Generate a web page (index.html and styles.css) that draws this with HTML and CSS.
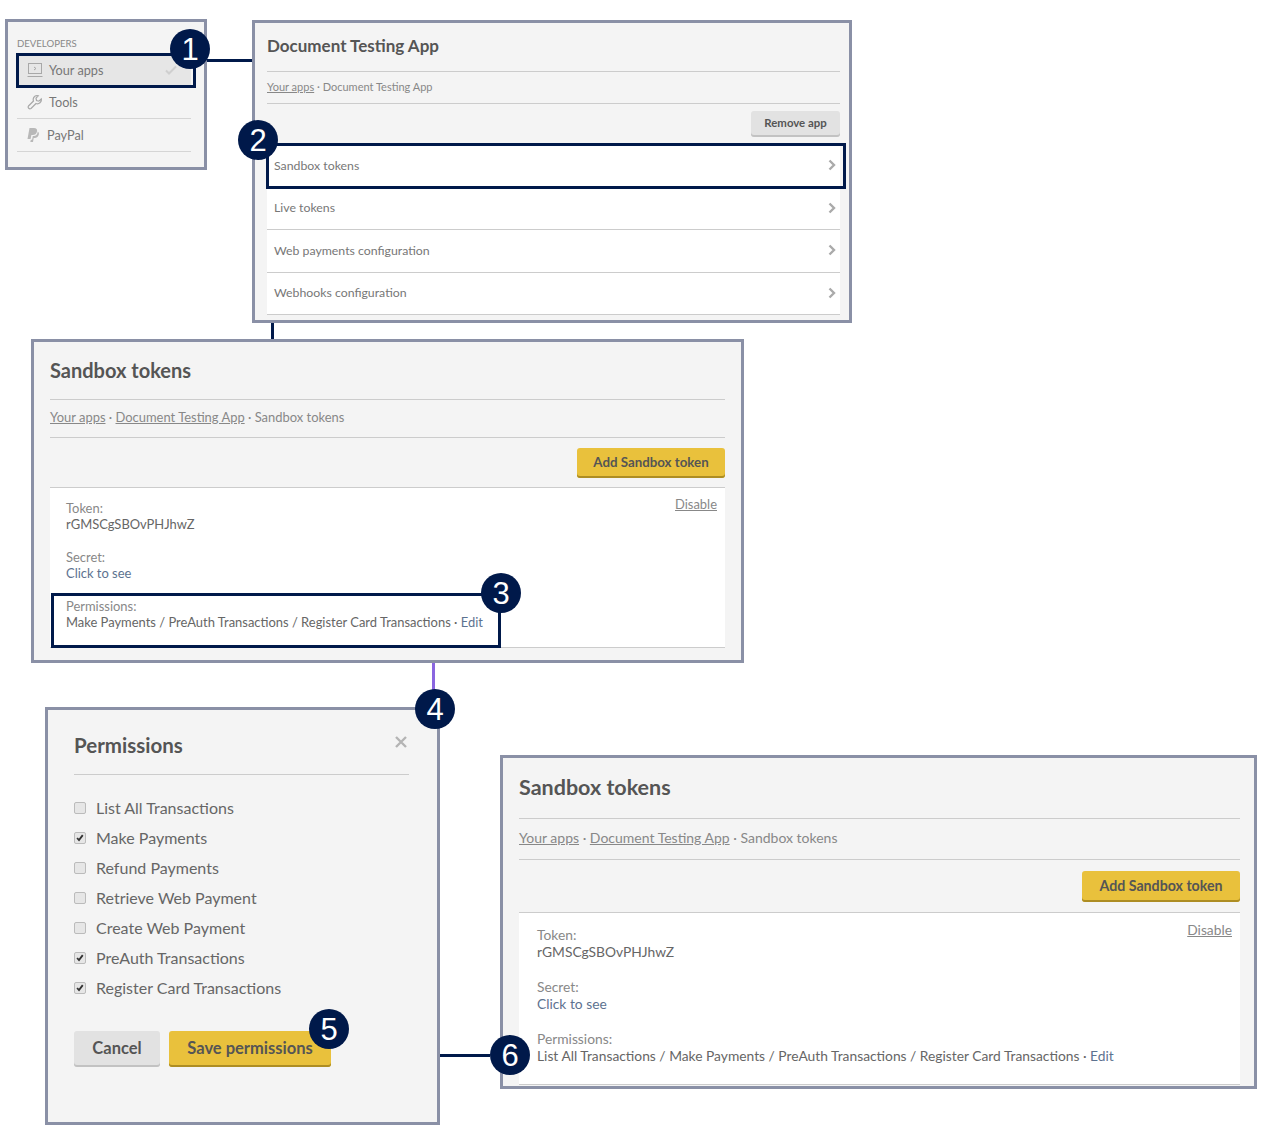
FILE: index.html
```html
<!DOCTYPE html>
<html lang="en">
<head>
<meta charset="UTF-8">
<meta name="viewport" content="width=device-width, initial-scale=1.0">
<title>Sandbox tokens</title>
<link rel="stylesheet" href="styles.css">
</head>
<body>
<div class="canvas">

    <!-- connectors between the screens -->
    <div class="wire wire-1"></div>
    <div class="wire wire-2"></div>
    <div class="wire wire-3"></div>
    <div class="wire wire-4"></div>

    <!-- sidebar -->
    <div class="shot shot-nav">
        <div class="nav-title">DEVELOPERS</div>
        <div class="nav-item nav-active">
            <svg class="nav-icon" viewBox="0 0 16 16" fill="none" stroke="#a8a8a8" stroke-width="1"><rect x="1.500" y="1.500" width="13" height="10"/><path d="M0.500 14.500h15M7 5l2 1.500L7 8"/></svg>
            <span>Your apps</span>
            <svg class="nav-check" viewBox="0 0 12 10" fill="none" stroke="#cfcfcf" stroke-width="2"><path d="M1 5.500l3 3 7-7"/></svg>
        </div>
        <div class="nav-item">
            <svg class="nav-icon" viewBox="0 0 16 16" fill="none" stroke="#a8a8a8" stroke-width="1.200"><path d="M10 1.500a4 4 0 0 0-3.500 5.500L1.500 12a1.800 1.800 0 0 0 2.500 2.500L9 9.500a4 4 0 0 0 5.300-4.500L11.800 7.200 9.500 6.500 9 4.200 11.300 1.700A4 4 0 0 0 10 1.500z"/></svg>
            <span>Tools</span>
        </div>
        <div class="nav-item nav-paypal">
            <svg class="nav-icon nav-icon-pp" viewBox="0 0 12 14" fill="#b8b8b8"><path d="M2.500 0H7c2.400 0 3.500 1.300 3 3.400C9.500 5.700 8 7 5.700 7H4.400L3.600 11H.500z"/><path d="M10.800 3.500c1 .7 1.300 1.700 1 3C11.300 8.700 9.800 10 7.600 10H6.700L6 14H3.300l.5-2.300h1.300L5.800 8h1c2.200 0 3.600-1.300 4-4.500z"/></svg>
            <span>PayPal</span>
        </div>
    </div>

    <!-- app detail -->
    <div class="shot shot-app">
        <h2 class="shot-title">Document Testing App</h2>
        <div class="crumbs"><a>Your apps</a> · Document Testing App</div>
        <div class="actions"><button class="btn btn-grey">Remove app</button></div>
        <div class="menu">
            <div class="menu-row">Sandbox tokens<svg class="chevron" viewBox="0 0 8 12" fill="none" stroke="#aaa" stroke-width="2.400"><path d="M1.500 1.500L6 6l-4.500 4.500"/></svg></div>
            <div class="menu-row">Live tokens<svg class="chevron" viewBox="0 0 8 12" fill="none" stroke="#aaa" stroke-width="2.400"><path d="M1.500 1.500L6 6l-4.500 4.500"/></svg></div>
            <div class="menu-row">Web payments configuration<svg class="chevron" viewBox="0 0 8 12" fill="none" stroke="#aaa" stroke-width="2.400"><path d="M1.500 1.500L6 6l-4.500 4.500"/></svg></div>
            <div class="menu-row">Webhooks configuration<svg class="chevron" viewBox="0 0 8 12" fill="none" stroke="#aaa" stroke-width="2.400"><path d="M1.500 1.500L6 6l-4.500 4.500"/></svg></div>
        </div>
    </div>

    <!-- sandbox tokens before edit -->
    <div class="shot shot-tokens">
        <h2 class="shot-title">Sandbox tokens</h2>
        <div class="crumbs"><a>Your apps</a> · <a>Document Testing App</a> · Sandbox tokens</div>
        <div class="actions"><button class="btn btn-yellow">Add Sandbox token</button></div>
        <div class="token-card">
            <a class="disable">Disable</a>
            <div class="field"><div class="field-label">Token:</div><div>rGMSCgSBOvPHJhwZ</div></div>
            <div class="field"><div class="field-label">Secret:</div><div class="link">Click to see</div></div>
            <div class="field"><div class="field-label">Permissions:</div><div>Make Payments / PreAuth Transactions / Register Card Transactions · <span class="link">Edit</span></div></div>
        </div>
    </div>

    <!-- permissions dialog -->
    <div class="shot shot-dialog">
        <div class="dialog-head">
            <h2 class="shot-title">Permissions</h2>
            <svg class="dialog-close" viewBox="0 0 12 12" fill="none" stroke="#b4b4b4" stroke-width="2.400"><path d="M1 1l10 10M11 1L1 11"/></svg>
        </div>
        <ul class="perm-list">
            <li><span class="box"></span>List All Transactions</li>
            <li><span class="box"><svg viewBox="0 0 12 12" fill="none" stroke="#333" stroke-width="2.200"><path d="M2.500 6l2.300 2.500 4.500-6"/></svg></span>Make Payments</li>
            <li><span class="box"></span>Refund Payments</li>
            <li><span class="box"></span>Retrieve Web Payment</li>
            <li><span class="box"></span>Create Web Payment</li>
            <li><span class="box"><svg viewBox="0 0 12 12" fill="none" stroke="#333" stroke-width="2.200"><path d="M2.500 6l2.300 2.500 4.500-6"/></svg></span>PreAuth Transactions</li>
            <li><span class="box"><svg viewBox="0 0 12 12" fill="none" stroke="#333" stroke-width="2.200"><path d="M2.500 6l2.300 2.500 4.500-6"/></svg></span>Register Card Transactions</li>
        </ul>
        <div class="dialog-buttons">
            <button class="btn btn-grey btn-cancel">Cancel</button>
            <button class="btn btn-yellow btn-save">Save permissions</button>
        </div>
    </div>

    <!-- sandbox tokens after edit -->
    <div class="shot shot-tokens shot-tokens-big">
        <h2 class="shot-title">Sandbox tokens</h2>
        <div class="crumbs"><a>Your apps</a> · <a>Document Testing App</a> · Sandbox tokens</div>
        <div class="actions"><button class="btn btn-yellow">Add Sandbox token</button></div>
        <div class="token-card">
            <a class="disable">Disable</a>
            <div class="field"><div class="field-label">Token:</div><div>rGMSCgSBOvPHJhwZ</div></div>
            <div class="field"><div class="field-label">Secret:</div><div class="link">Click to see</div></div>
            <div class="field"><div class="field-label">Permissions:</div><div>List All Transactions / Make Payments / PreAuth Transactions / Register Card Transactions · <span class="link">Edit</span></div></div>
        </div>
    </div>

    <!-- highlight boxes -->
    <div class="mark mark-1"></div>
    <div class="mark mark-2"></div>
    <div class="mark mark-3"></div>

    <!-- numbered callouts -->
    <div class="badge badge-1">1</div>
    <div class="badge badge-2">2</div>
    <div class="badge badge-3">3</div>
    <div class="badge badge-4">4</div>
    <div class="badge badge-5">5</div>
    <div class="badge badge-6">6</div>
</div>
</body>
</html>
```

FILE: styles.css
```css
body {
    margin: 0;
    font-family: Lato, 'Open Sans', sans-serif;
    background-color: #fff;
    color: #666;
}

.canvas {
    position: relative;
    width: 1280px;
    height: 1148px;
    overflow: hidden;
}

/* screens */
.shot {
    position: absolute;
    box-sizing: border-box;
    border: 3px solid #8a90a6;
    background-color: #f4f4f4;
}

.shot-nav {
    left: 5px;
    top: 19px;
    width: 202px;
    height: 151px;
    padding: 16px 13px 0 9px;
}

.shot-app {
    left: 252px;
    top: 20px;
    width: 600px;
    height: 303px;
    padding: 0 9px 0 12px;
    font-size: 11px;
}

.shot-tokens {
    left: 31px;
    top: 339px;
    width: 713px;
    height: 324px;
    padding: 0 16px;
    font-size: 12.950px;
}

.shot-tokens-big {
    left: 500px;
    top: 755px;
    width: 757px;
    height: 334px;
    padding: 0 14px 0 16px;
    font-size: 13.800px;
}

.shot-dialog {
    left: 45px;
    top: 707px;
    width: 395px;
    height: 418px;
    padding: 0 28px 0 26px;
}

/* sidebar */
.nav-title {
    font-size: 9.600px;
    line-height: 12px;
    color: #888;
    margin-bottom: 3px;
}

.nav-item {
    display: flex;
    align-items: center;
    height: 32px;
    padding-left: 10px;
    border-bottom: 1px solid #d5d5d5;
    font-size: 12.700px;
    color: #777;
}

.nav-active {
    height: 33px;
    background-color: #e6e6e6;
    border-bottom: none;
}

.nav-icon {
    width: 16px;
    height: 16px;
    margin-right: 6px;
}

.nav-icon-pp {
    width: 12px;
    height: 14px;
    margin-right: 8px;
}

.nav-check {
    width: 12px;
    height: 10px;
    margin-left: auto;
    margin-right: 14px;
}

/* headings and breadcrumbs */
.shot-title {
    margin: 0;
    font-size: 17px;
    font-weight: 700;
    line-height: 46px;
    height: 48px;
    color: #555;
    border-bottom: 1px solid #ccc;
}

.crumbs {
    height: 31px;
    line-height: 30px;
    color: #888;
    border-bottom: 1px solid #ccc;
}

.crumbs a,
.disable {
    color: #888;
    text-decoration: underline;
}

.actions {
    display: flex;
    justify-content: flex-end;
    padding-top: 7px;
}

/* buttons */
.btn {
    border: none;
    border-radius: 3px;
    padding: 0 0 3px;
    font-family: inherit;
    font-weight: 700;
    color: #555;
}

.btn-grey {
    background-color: #e2e2e2;
    box-shadow: inset 0 -2px 0 #c2c2c2;
}

.btn-yellow {
    background-color: #e9c13c;
    box-shadow: inset 0 -2px 0 #ad8d23;
}

.shot-app .btn {
    width: 89px;
    height: 26px;
    font-size: 11.400px;
}

/* app menu */
.menu {
    margin-top: 8px;
    background-color: #fff;
}

.menu-row {
    display: flex;
    align-items: center;
    justify-content: space-between;
    box-sizing: border-box;
    height: 42.500px;
    padding: 0 4px 1px 7px;
    font-size: 12.300px;
    color: #777;
    border-bottom: 1px solid #ccc;
}

.chevron {
    width: 8px;
    height: 12px;
}

/* token panels */
.shot-tokens .shot-title {
    font-size: 20px;
    height: 57px;
    line-height: 56px;
}

.shot-tokens .crumbs {
    height: 37px;
    line-height: 35px;
}

.shot-tokens .actions {
    padding-top: 10px;
    padding-bottom: 9px;
    border-bottom: 1px solid #ccc;
}

.shot-tokens .btn {
    width: 148px;
    height: 30px;
    font-size: 13.300px;
}

.token-card {
    position: relative;
    box-sizing: border-box;
    height: 160px;
    padding: 12px 16px 0;
    background-color: #fff;
    border-bottom: 1px solid #ccc;
    color: #666;
    line-height: 16px;
}

.field {
    height: 49px;
}

.field-label {
    color: #888;
}

.link {
    color: #5d7290;
}

.disable {
    position: absolute;
    right: 8px;
    top: 8px;
}

.shot-tokens-big .shot-title {
    font-size: 21.500px;
    height: 60px;
    line-height: 58px;
}

.shot-tokens-big .crumbs {
    height: 40px;
    line-height: 38px;
    font-size: 14px;
}

.shot-tokens-big .actions {
    padding-top: 11px;
    padding-bottom: 10px;
}

.shot-tokens-big .btn {
    width: 158px;
    height: 31px;
    font-size: 14.200px;
}

.shot-tokens-big .token-card {
    height: 172px;
    padding: 13px 18px 0;
    line-height: 17px;
}

.shot-tokens-big .field {
    height: 52px;
}

.shot-tokens-big .disable {
    right: 8px;
    top: 8px;
}

/* permissions dialog */
.dialog-head {
    position: relative;
}

.dialog-head .shot-title {
    font-size: 20.500px;
    height: 64px;
    line-height: 70px;
}

.dialog-close {
    position: absolute;
    right: 2px;
    top: 26px;
    width: 12px;
    height: 12px;
}

.perm-list {
    list-style: none;
    margin: 17px 0 0;
    padding: 0;
}

.perm-list li {
    display: flex;
    align-items: center;
    height: 30px;
    font-size: 16px;
    color: #666;
}

.box {
    display: flex;
    box-sizing: border-box;
    width: 12px;
    height: 12px;
    margin: 1px 10px 0 0;
    border: 1px solid #bbb;
    border-radius: 2px;
    background-color: #e6e6e6;
}

.dialog-buttons {
    display: flex;
    gap: 9px;
    margin-top: 29px;
}

.dialog-buttons .btn {
    height: 36px;
    font-size: 16.500px;
}

.btn-cancel {
    width: 86px;
}

.btn-save {
    width: 162px;
}

/* annotation layer */
.wire {
    position: absolute;
    background-color: #00194a;
}

.wire-1 {
    left: 207px;
    top: 59px;
    width: 45px;
    height: 3px;
}

.wire-2 {
    left: 271px;
    top: 323px;
    width: 3px;
    height: 16px;
}

.wire-3 {
    left: 432px;
    top: 663px;
    width: 3px;
    height: 28px;
    background-color: #8a66e0;
}

.wire-4 {
    left: 440px;
    top: 1054px;
    width: 50px;
    height: 3px;
}

.mark {
    position: absolute;
    box-sizing: border-box;
    border: 3px solid #00194a;
}

.mark-1 {
    left: 16px;
    top: 53px;
    width: 180px;
    height: 35px;
}

.mark-2 {
    left: 266px;
    top: 143px;
    width: 580px;
    height: 46px;
}

.mark-3 {
    left: 51px;
    top: 593px;
    width: 450px;
    height: 55px;
}

.badge {
    position: absolute;
    width: 40px;
    height: 40px;
    border-radius: 50%;
    background-color: #00194a;
    color: #fff;
    font-family: 'Liberation Sans', Arial, sans-serif;
    font-size: 31px;
    line-height: 41px;
    text-align: center;
}

.badge-1 { left: 170px; top: 29px; }
.badge-2 { left: 238px; top: 120px; }
.badge-3 { left: 481px; top: 573px; }
.badge-4 { left: 415px; top: 689px; }
.badge-5 { left: 309px; top: 1009px; }
.badge-6 { left: 490px; top: 1035px; }
```
